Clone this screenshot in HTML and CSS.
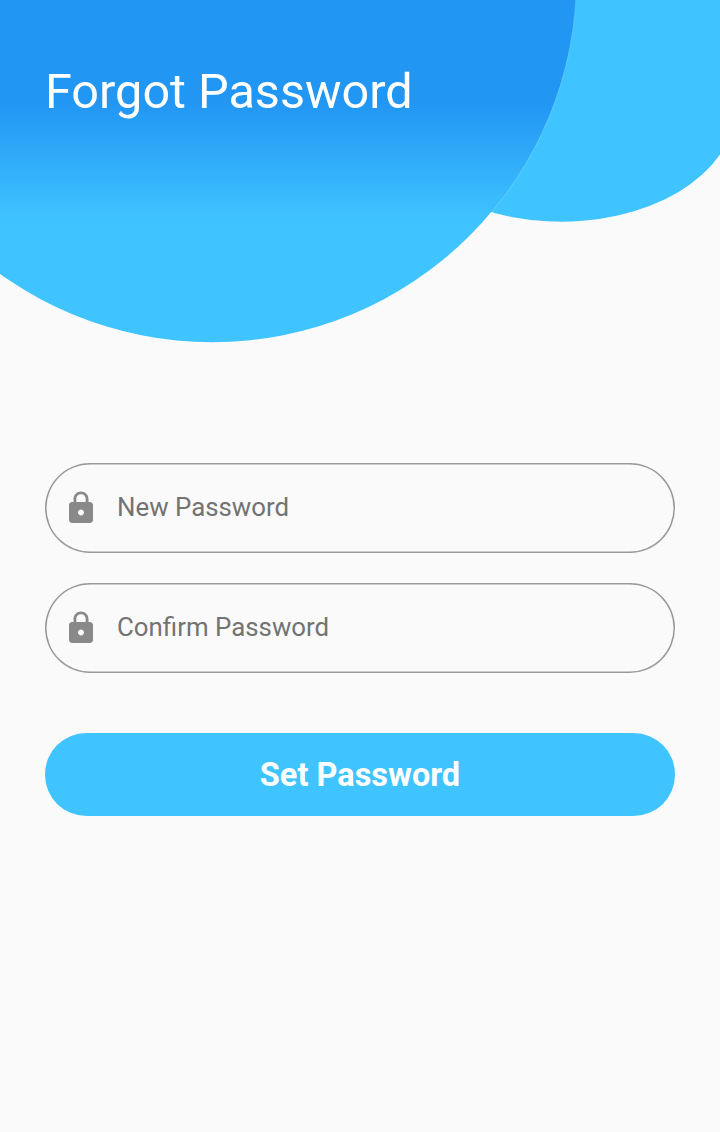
FILE: index.html
```html
<!DOCTYPE html>
<html lang="en">
<head>
<meta charset="utf-8">
<title>Forgot Password</title>
<link rel="stylesheet" href="styles.css">
</head>
<body>
<main class="screen">
  <header class="hero">
    <svg class="hero-art" viewBox="0 0 720 360" aria-hidden="true">
      <defs>
        <linearGradient id="sky" gradientUnits="userSpaceOnUse" x1="0" y1="102" x2="0" y2="222">
          <stop offset="0" stop-color="#2196f3"/>
          <stop offset="1" stop-color="#40c4ff"/>
        </linearGradient>
      </defs>
      <path d="M480 0H720V154.500A174 114 0 0 1 480 208.500Z" fill="#40c4ff"/>
      <circle cx="212.300" cy="-22" r="364.200" fill="url(#sky)"/>
      <path d="M575.800 0A364.200 364.200 0 0 1 492 212" fill="none" stroke="#fff" stroke-opacity=".25" stroke-width=".7"/>
    </svg>
    <h1 class="title">Forgot Password</h1>
  </header>
  <form class="form">
    <label class="field">
      <svg class="lock" viewBox="0 0 24 24"><path d="M18 8h-1V6c0-2.760-2.240-5-5-5S7 3.240 7 6v2H6c-1.100 0-2 .9-2 2v10c0 1.100.9 2 2 2h12c1.100 0 2-.9 2-2V10c0-1.100-.9-2-2-2zm-6 9c-1.100 0-2-.9-2-2s.9-2 2-2 2 .9 2 2-.9 2-2 2zm3.100-9H8.900V6c0-1.710 1.390-3.100 3.100-3.100s3.100 1.390 3.100 3.100v2z"/></svg>
      <input class="input" type="password" placeholder="New Password">
    </label>
    <label class="field">
      <svg class="lock" viewBox="0 0 24 24"><path d="M18 8h-1V6c0-2.760-2.240-5-5-5S7 3.240 7 6v2H6c-1.100 0-2 .9-2 2v10c0 1.100.9 2 2 2h12c1.100 0 2-.9 2-2V10c0-1.100-.9-2-2-2zm-6 9c-1.100 0-2-.9-2-2s.9-2 2-2 2 .9 2 2-.9 2-2 2zm3.100-9H8.900V6c0-1.710 1.390-3.100 3.100-3.100s3.100 1.390 3.100 3.100v2z"/></svg>
      <input class="input" type="password" placeholder="Confirm Password">
    </label>
    <button class="submit" type="button">Set Password</button>
  </form>
</main>
</body>
</html>
```
FILE: styles.css
```css
* {
  box-sizing: border-box;
}

body {
  margin: 0;
  background: #fafafa;
  font-family: Roboto, "Liberation Sans", sans-serif;
}

.screen {
  height: 1132px;
  display: flex;
  flex-direction: column;
  overflow: hidden;
}

.hero {
  display: grid;
  height: 360px;
}

.hero-art,
.title {
  grid-area: 1 / 1;
}

.hero-art {
  width: 720px;
  height: 360px;
}

.title {
  z-index: 1;
  margin: 0;
  padding: 64px 45px 0;
  color: #fff;
  font-size: 48.6px;
  font-weight: 400;
  line-height: 56px;
}

.form {
  display: flex;
  flex-direction: column;
  gap: 30px;
  padding: 103px 45px 0;
}

.field {
  display: flex;
  align-items: center;
  gap: 18px;
  height: 90px;
  padding: 0 18px;
  border-radius: 45px;
  box-shadow: inset 0 0 0 1.5px #999;
}

.lock {
  flex: none;
  width: 36px;
  height: 36px;
  fill: #898989;
}

.input {
  flex: 1;
  min-width: 0;
  height: 36px;
  padding: 0 0 2px;
  border: 0;
  outline: 0;
  background: transparent;
  font: 400 25.85px/34px Roboto, "Liberation Sans", sans-serif;
}

.input::placeholder {
  color: #737373;
  opacity: 1;
}

.submit {
  height: 82.5px;
  margin-top: 30px;
  padding: 2px 0 0;
  border: 0;
  border-radius: 41.25px;
  background: #40c4ff;
  color: #fff;
  font: 700 32.5px/40px Roboto, "Liberation Sans", sans-serif;
}
```
